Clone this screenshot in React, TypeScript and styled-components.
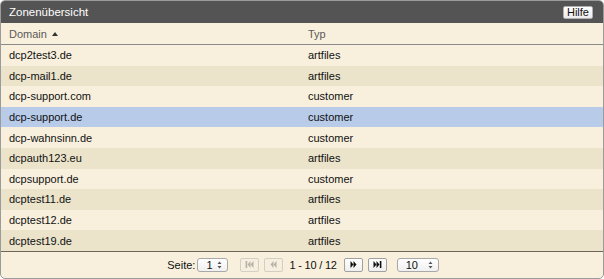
import { Fragment } from 'react';
import styled, { createGlobalStyle } from 'styled-components';

const GlobalStyle = createGlobalStyle`
  html, body {
    margin: 0;
    padding: 0;
    background: #ffffff;
  }
  body {
    font-family: "Liberation Sans", Arial, sans-serif;
    font-size: 11px;
  }
`;

const Panel = styled.div`
  display: flex;
  flex-direction: column;
  box-sizing: border-box;
  width: 604px;
  height: 279px;
  border: 1px solid #9b9b9b;
  border-radius: 5px;
  overflow: hidden;
  background: #f8f0dd;
`;

const TitleBar = styled.div`
  display: flex;
  align-items: center;
  justify-content: space-between;
  height: 22px;
  padding: 0 10px 0 8px;
  background: #545454;
  color: #ffffff;
  font-size: 11.5px;
`;

const HelpButton = styled.button`
  height: 13px;
  padding: 0 3px;
  border: 1px solid #b0b0b0;
  border-radius: 2px;
  background: linear-gradient(#ffffff, #ececec);
  color: #111;
  font-family: inherit;
  font-size: 11px;
  line-height: 11px;
`;

const Grid = styled.div`
  display: grid;
  grid-template-columns: 299px 1fr;
`;

const HeadCell = styled.div`
  display: flex;
  align-items: center;
  gap: 5px;
  height: 21px;
  padding-left: 8px;
  color: #5a5a5a;
  border-bottom: 1px solid #8a8a8a;
`;

const SortArrow = styled.span`
  width: 0;
  height: 0;
  border-left: 3px solid transparent;
  border-right: 3px solid transparent;
  border-bottom: 4px solid #333;
`;

const Cell = styled.div<{ $bg: string }>`
  display: flex;
  align-items: center;
  height: 20.6px;
  padding-left: 8px;
  background: ${p => p.$bg};
  color: #111;
`;

const Footer = styled.div`
  display: flex;
  align-items: center;
  justify-content: center;
  flex: 1;
  padding-left: 2px;
  border-top: 1px solid #6e6659;
  color: #111;
`;

const Label = styled.span`
  margin-right: 2px;
`;

const SelectBox = styled.div<{ $w: number; $gap?: number }>`
  display: flex;
  align-items: center;
  justify-content: space-between;
  box-sizing: border-box;
  width: ${p => p.$w}px;
  height: 14px;
  margin-right: ${p => p.$gap ?? 0}px;
  padding: 0 5px 0 8px;
  border: 1px solid #a8a8a8;
  border-radius: 3px;
  background: linear-gradient(#ffffff, #f0f0f0);
`;

const PagerButton = styled.button<{ $off?: boolean; $gap?: number }>`
  display: flex;
  align-items: center;
  justify-content: center;
  box-sizing: border-box;
  width: 19px;
  height: 14px;
  margin-right: ${p => p.$gap ?? 0}px;
  padding: 0;
  border: 1px solid ${p => (p.$off ? '#d4cfc4' : '#a0a0a0')};
  border-radius: 2px;
  background: ${p => (p.$off ? '#f6efe0' : 'linear-gradient(#ffffff, #efefef)')};
  color: ${p => (p.$off ? '#b7b1a6' : '#111')};
`;

const Range = styled.span`
  margin: 0 7px 0 6px;
  letter-spacing: -0.2px;
`;

const rows = [
  ['dcp2test3.de', 'artfiles'],
  ['dcp-mail1.de', 'artfiles'],
  ['dcp-support.com', 'customer'],
  ['dcp-support.de', 'customer'],
  ['dcp-wahnsinn.de', 'customer'],
  ['dcpauth123.eu', 'artfiles'],
  ['dcpsupport.de', 'customer'],
  ['dcptest11.de', 'artfiles'],
  ['dcptest12.de', 'artfiles'],
  ['dcptest19.de', 'artfiles'],
];

const selected = 3;

function rowColor(i: number) {
  if (i === selected) return '#b8cbe9';
  return i % 2 === 0 ? '#f8f0dd' : '#ebe3ca';
}

function Spinner() {
  return (
    <svg width="5" height="8" viewBox="0 0 5 8">
      <path d="M2.5 0.5 L4.5 3 H0.5 Z M2.5 7.5 L4.5 5 H0.5 Z" fill="#555" />
    </svg>
  );
}

function PagerIcon({ dir, bar }: { dir: 'left' | 'right'; bar?: boolean }) {
  const right = dir === 'right';
  return (
    <svg width="9" height="7" viewBox="0 0 9 7" fill="currentColor">
      <g transform={right ? undefined : 'translate(9 0) scale(-1 1)'}>
        {bar ? (
          <>
            <path d="M0.5 0 L3.5 3.5 L0.5 7 Z" />
            <path d="M3.5 0 L6.5 3.5 L3.5 7 Z" />
            <rect x="6.8" y="0" width="1.6" height="7" />
          </>
        ) : (
          <>
            <path d="M1.5 0 L4.5 3.5 L1.5 7 Z" />
            <path d="M4.5 0 L7.5 3.5 L4.5 7 Z" />
          </>
        )}
      </g>
    </svg>
  );
}

export default function App() {
  return (
    <>
      <GlobalStyle />
      <Panel>
        <TitleBar>
          <span>Zonenübersicht</span>
          <HelpButton>Hilfe</HelpButton>
        </TitleBar>
        <Grid>
          <HeadCell>
            Domain <SortArrow />
          </HeadCell>
          <HeadCell>Typ</HeadCell>
          {rows.map(([domain, typ], i) => (
            <Fragment key={domain}>
              <Cell $bg={rowColor(i)}>{domain}</Cell>
              <Cell $bg={rowColor(i)}>{typ}</Cell>
            </Fragment>
          ))}
        </Grid>
        <Footer>
          <Label>Seite:</Label>
          <SelectBox $w={31} $gap={12}>
            <span>1</span>
            <Spinner />
          </SelectBox>
          <PagerButton $off $gap={5}>
            <PagerIcon dir="left" bar />
          </PagerButton>
          <PagerButton $off>
            <PagerIcon dir="left" />
          </PagerButton>
          <Range>1 - 10 / 12</Range>
          <PagerButton $gap={5}>
            <PagerIcon dir="right" />
          </PagerButton>
          <PagerButton $gap={10}>
            <PagerIcon dir="right" bar />
          </PagerButton>
          <SelectBox $w={42}>
            <span>10</span>
            <Spinner />
          </SelectBox>
        </Footer>
      </Panel>
    </>
  );
}
